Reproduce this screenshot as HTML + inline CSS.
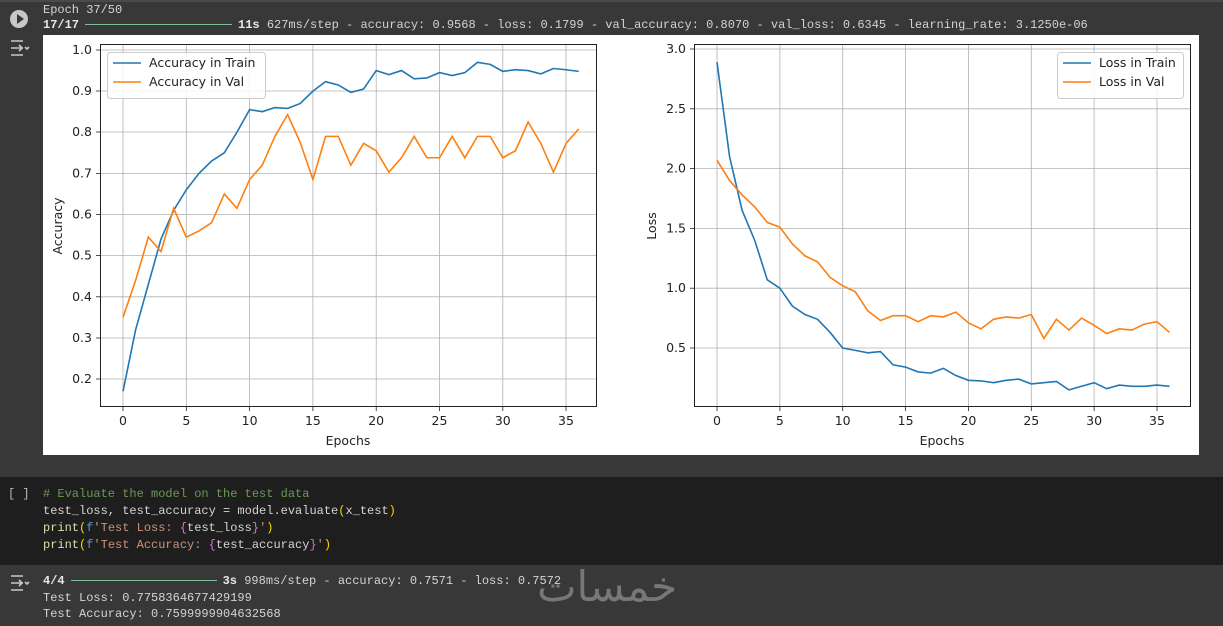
<!DOCTYPE html>
<html><head><meta charset="utf-8"><style>
body{margin:0;width:1223px;height:626px;background:#383838;overflow:hidden;position:relative;font-family:"Liberation Mono",monospace;font-size:12px;color:#d4d4d4}
.t{position:absolute;white-space:pre;line-height:17px}
b{font-weight:bold;color:#e8e8e8}
.bar{display:inline-block;height:1px;background:#7fbf96;vertical-align:middle;margin:0 6px}
#code{position:absolute;left:0;top:477px;width:1223px;height:88px;background:#1e1e1e}
svg text{font-family:"DejaVu Sans","Liberation Sans",sans-serif;font-size:12.5px;fill:#222}
</style></head><body>
<div style="position:absolute;left:0;top:0;width:1223px;height:2px;background:#4a4a4a"></div>
<div style="position:absolute;left:10px;top:10px;width:18px;height:18px;border-radius:50%;background:#c8c8c8"></div>
<div style="position:absolute;left:17px;top:14px;width:0;height:0;border-left:7px solid #383838;border-top:5px solid transparent;border-bottom:5px solid transparent"></div>
<svg style="position:absolute;left:9px;top:39px" width="22" height="18" viewBox="0 0 22 18"><path d="M2 2h12M2 16h12M2 9h12M10 6l3 3-3 3M16 8l2 2 2-2" stroke="#c8c8c8" stroke-width="1.6" fill="none"/></svg>
<div class="t" style="left:43px;top:2px">Epoch 37/50</div>
<div class="t" style="left:43px;top:17px"><b>17/17</b><span class="bar" style="width:147px"></span><b>11s</b> 627ms/step - accuracy: 0.9568 - loss: 0.1799 - val_accuracy: 0.8070 - val_loss: 0.6345 - learning_rate: 3.1250e-06</div>
<div style="position:absolute;left:43px;top:35px;width:1156px;height:420px;background:#fff"></div>
<svg id="ch" style="position:absolute;left:0;top:0" width="1223" height="470">
<g stroke="#b0b0b0" stroke-width="0.8" id="grid"></g>
<rect x="100.5" y="44.5" width="496" height="362" fill="none" stroke="#222" stroke-width="1"/>
<rect x="694.5" y="44.5" width="496" height="362" fill="none" stroke="#222" stroke-width="1"/>
<g text-anchor="end">
<text x="92" y="54">1.0</text><text x="92" y="95">0.9</text><text x="92" y="136">0.8</text><text x="92" y="177.5">0.7</text><text x="92" y="218.5">0.6</text><text x="92" y="259.6">0.5</text><text x="92" y="300.8">0.4</text><text x="92" y="342">0.3</text><text x="92" y="383">0.2</text>
<text x="686" y="53">3.0</text><text x="686" y="112.8">2.5</text><text x="686" y="172.6">2.0</text><text x="686" y="232.4">1.5</text><text x="686" y="292.2">1.0</text><text x="686" y="352">0.5</text>
</g>
<g text-anchor="middle">
<text x="123" y="425">0</text><text x="186.3" y="425">5</text><text x="249.6" y="425">10</text><text x="312.9" y="425">15</text><text x="376.2" y="425">20</text><text x="439.5" y="425">25</text><text x="502.8" y="425">30</text><text x="566" y="425">35</text>
<text x="717" y="425">0</text><text x="779.9" y="425">5</text><text x="842.7" y="425">10</text><text x="905.6" y="425">15</text><text x="968.4" y="425">20</text><text x="1031.3" y="425">25</text><text x="1094.1" y="425">30</text><text x="1157" y="425">35</text>
<text x="348" y="445">Epochs</text><text x="942" y="445">Epochs</text>
<text transform="translate(62 226) rotate(-90)">Accuracy</text>
<text transform="translate(656 226) rotate(-90)">Loss</text>
</g>
<g id="lines" fill="none" stroke-width="1.6"></g>
<rect x="107.5" y="52.5" width="158" height="46" rx="3" fill="#fff" fill-opacity="0.85" stroke="#ccc"/>
<line x1="113" y1="63" x2="141" y2="63" stroke="#1f77b4" stroke-width="1.6"/><line x1="113" y1="82" x2="141" y2="82" stroke="#ff7f0e" stroke-width="1.6"/>
<text x="149" y="67">Accuracy in Train</text><text x="149" y="86">Accuracy in Val</text>
<rect x="1057.5" y="52.5" width="126" height="46" rx="3" fill="#fff" fill-opacity="0.85" stroke="#ccc"/>
<line x1="1063" y1="63" x2="1091" y2="63" stroke="#1f77b4" stroke-width="1.6"/><line x1="1063" y1="82" x2="1091" y2="82" stroke="#ff7f0e" stroke-width="1.6"/>
<text x="1099" y="67">Loss in Train</text><text x="1099" y="86">Loss in Val</text>
</svg>
<div id="code"></div>
<div class="t" style="left:8px;top:486px;color:#bbb">[ ]</div>
<div class="t" style="left:43px;top:486px;color:#6a9955"># Evaluate the model on the test data</div>
<div class="t" style="left:43px;top:503px">test_loss, test_accuracy = model.evaluate<span style="color:#ffd700">(</span>x_test<span style="color:#ffd700">)</span></div>
<div class="t" style="left:43px;top:520px"><span style="color:#dcdcaa">print</span><span style="color:#ffd700">(</span><span style="color:#569cd6">f</span><span style="color:#ce9178">'Test Loss: </span><span style="color:#da70d6">{</span>test_loss<span style="color:#da70d6">}</span><span style="color:#ce9178">'</span><span style="color:#ffd700">)</span></div>
<div class="t" style="left:43px;top:537px"><span style="color:#dcdcaa">print</span><span style="color:#ffd700">(</span><span style="color:#569cd6">f</span><span style="color:#ce9178">'Test Accuracy: </span><span style="color:#da70d6">{</span>test_accuracy<span style="color:#da70d6">}</span><span style="color:#ce9178">'</span><span style="color:#ffd700">)</span></div>
<svg style="position:absolute;left:9px;top:574px" width="22" height="18" viewBox="0 0 22 18"><path d="M2 2h12M2 16h12M2 9h12M10 6l3 3-3 3M16 8l2 2 2-2" stroke="#c8c8c8" stroke-width="1.6" fill="none"/></svg>
<div class="t" style="left:43px;top:573px"><b>4/4</b><span class="bar" style="width:146px"></span><b>3s</b> 998ms/step - accuracy: 0.7571 - loss: 0.7572</div>
<div class="t" style="left:43px;top:590px">Test Loss: 0.7758364677429199</div>
<div class="t" style="left:43px;top:606px">Test Accuracy: 0.7599999904632568</div>
<div style="position:absolute;left:537px;top:562px;font-family:'DejaVu Sans',sans-serif;font-size:42px;color:#777;line-height:50px">خمسات</div>
<script>
var ns="http://www.w3.org/2000/svg",g=document.getElementById('grid'),L=document.getElementById('lines');
function ln(p,a){var e=document.createElementNS(ns,'line');for(var k in a)e.setAttribute(k,a[k]);p.appendChild(e);}
[123,186.3,249.6,312.9,376.2,439.5,502.8,566].forEach(function(x){ln(g,{x1:x,x2:x,y1:45,y2:406});ln(g,{x1:x,x2:x,y1:407,y2:411,stroke:'#222'})});
[50,91,132,173.5,214.5,255.6,296.8,338,379].forEach(function(y){ln(g,{x1:101,x2:596,y1:y,y2:y});ln(g,{x1:96,x2:100,y1:y,y2:y,stroke:'#222'})});
[717,779.9,842.7,905.6,968.4,1031.3,1094.1,1157].forEach(function(x){ln(g,{x1:x,x2:x,y1:45,y2:406});ln(g,{x1:x,x2:x,y1:407,y2:411,stroke:'#222'})});
[49,108.8,168.6,228.4,288.2,348].forEach(function(y){ln(g,{x1:695,x2:1190,y1:y,y2:y});ln(g,{x1:690,x2:694,y1:y,y2:y,stroke:'#222'})});
var at=[0.17,0.32,0.43,0.54,0.61,0.66,0.70,0.73,0.75,0.80,0.855,0.85,0.86,0.858,0.87,0.90,0.923,0.915,0.897,0.905,0.95,0.94,0.95,0.93,0.932,0.945,0.938,0.945,0.97,0.965,0.948,0.952,0.95,0.942,0.955,0.952,0.948];
var av=[0.35,0.44,0.545,0.51,0.615,0.545,0.56,0.58,0.65,0.615,0.685,0.72,0.79,0.843,0.775,0.685,0.79,0.79,0.72,0.773,0.755,0.703,0.738,0.79,0.738,0.738,0.79,0.738,0.79,0.79,0.738,0.755,0.825,0.773,0.703,0.773,0.808];
var lt=[2.89,2.1,1.65,1.4,1.07,1.0,0.85,0.78,0.74,0.63,0.50,0.48,0.46,0.47,0.36,0.34,0.30,0.29,0.33,0.27,0.23,0.225,0.21,0.23,0.24,0.20,0.21,0.22,0.15,0.18,0.21,0.16,0.19,0.18,0.18,0.19,0.18];
var lv=[2.07,1.9,1.78,1.68,1.55,1.51,1.37,1.27,1.22,1.09,1.02,0.97,0.81,0.73,0.77,0.77,0.72,0.77,0.76,0.80,0.71,0.66,0.74,0.76,0.75,0.78,0.58,0.74,0.65,0.75,0.69,0.62,0.66,0.65,0.70,0.72,0.63];
function pl(d,fx,fy,c){var e=document.createElementNS(ns,'polyline');e.setAttribute('points',d.map(function(v,i){return fx(i)+','+fy(v)}).join(' '));e.setAttribute('stroke',c);L.appendChild(e);}
var ax=function(i){return 123+i*12.66},ay=function(v){return 50+(1-v)*411.25};
var bx=function(i){return 717+i*12.571},by=function(v){return 49+(3-v)*119.6};
pl(at,ax,ay,'#1f77b4');pl(av,ax,ay,'#ff7f0e');pl(lt,bx,by,'#1f77b4');pl(lv,bx,by,'#ff7f0e');
</script>
</body></html>
